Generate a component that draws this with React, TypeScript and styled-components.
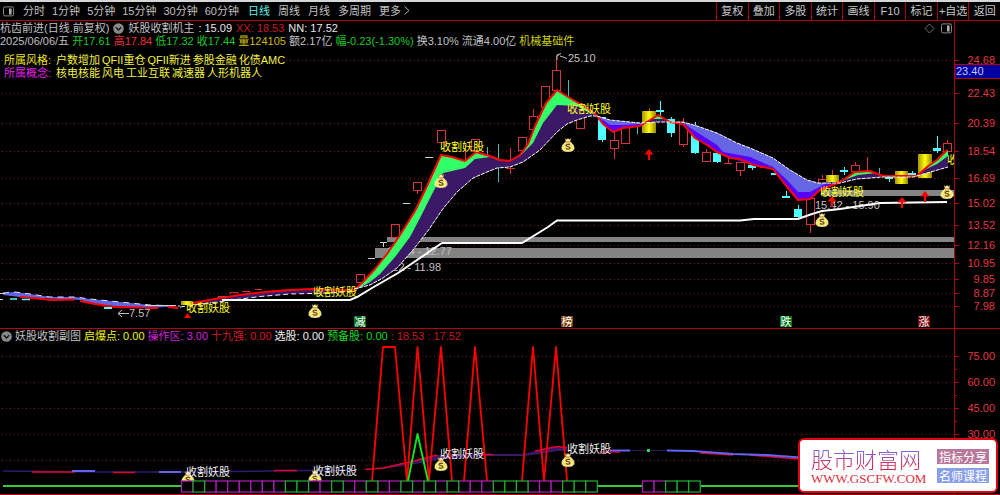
import React from 'react';
import styled, { createGlobalStyle } from 'styled-components';

const UI_FONT = '"Liberation Sans", "Noto Sans CJK SC", sans-serif';

const GlobalStyle = createGlobalStyle`
  * { box-sizing: border-box; }
  body { margin: 0; background: #000; font-family: ${UI_FONT}; font-size: 11px; line-height: 13px; color: #c0c0c0; }
  button { font: inherit; }
`;

const Screen = styled.main`
  position: relative;
  display: flex;
  flex-direction: column;
  background: #000;
`;

const WindowEdge = styled.div`
  height: 2px;
  background: #d4d6d8;
`;

const Toolbar = styled.header`
  display: flex;
  align-items: stretch;
  justify-content: space-between;
  height: 19px;
  border-bottom: 1px solid #b00010;
`;

const Periods = styled.nav`
  display: flex;
  align-items: center;
  gap: 9px;
  padding-left: 3px;
`;

const PeriodGroup = styled.div<{ $gap: number }>`
  display: flex;
  gap: ${(p) => p.$gap}px;
`;

const PeriodButton = styled.button<{ $active?: boolean }>`
  padding: 0;
  border: 0;
  background: none;
  white-space: nowrap;
  line-height: 13px;
  color: ${(p) => (p.$active ? '#5ff0e8' : '#c0c0c0')};
  cursor: pointer;
`;

const Actions = styled.div`
  display: grid;
  grid-template-columns: repeat(9, 1fr);
  flex: 0 0 284px;
`;

const ActionButton = styled.button`
  padding: 0;
  border: 0;
  border-left: 1px solid #a00010;
  background: none;
  color: #c8c8c8;
  white-space: nowrap;
  cursor: pointer;
`;

const Panel = styled.section`
  display: grid;
  border-bottom: 1px solid #b00010;
`;

const Chart = styled.svg`
  grid-area: 1 / 1;
  display: block;
  width: 100%;
  height: auto;
  font-family: ${UI_FONT};
  font-size: 11px;
`;

const Overlay = styled.div`
  grid-area: 1 / 1;
  z-index: 1;
  justify-self: stretch;
  align-self: start;
  padding-top: 1px;
`;

const InfoRow = styled.div<{ $gap: number; $indent?: number }>`
  display: flex;
  align-items: center;
  gap: ${(p) => p.$gap}px;
  padding-left: ${(p) => p.$indent ?? 0}px;
  height: 13px;
  white-space: nowrap;
`;

const Value = styled.span<{ $color?: string }>`
  color: ${(p) => p.$color ?? '#c0c0c0'};
`;

const PanelTools = styled.div`
  display: flex;
  gap: 6px;
  margin-left: auto;
  padding-right: 48px;
`;

const Traits = styled.div`
  margin-top: 6px;
`;

const TraitLabel = styled.span<{ $color: string }>`
  width: 50px;
  color: ${(p) => p.$color};
`;

const SiteCard = styled.a`
  position: absolute;
  right: 2px;
  bottom: 2px;
  display: flex;
  align-items: center;
  justify-content: space-between;
  width: 200px;
  height: 55px;
  padding: 0 7px 0 11px;
  border: 2px solid #e00010;
  border-radius: 6px;
  background: #fff;
  text-decoration: none;
`;

const SiteName = styled.div`
  font-size: 22px;
  line-height: 26px;
  font-weight: 300;
  font-family: "Noto Sans CJK SC", sans-serif;
  color: transparent;
  background: linear-gradient(#7a68e0 20%, #d02850 80%);
  background-clip: text;
  -webkit-background-clip: text;
`;

const SiteUrl = styled.div`
  font-family: "Liberation Serif", serif;
  font-size: 13px;
  line-height: 16px;
  color: #e03040;
`;

const CardTags = styled.div`
  display: grid;
  gap: 4px;
`;

const CardTag = styled.span<{ $bg: string }>`
  padding: 0 2px;
  height: 15px;
  font-family: "Noto Sans CJK SC", sans-serif;
  font-size: 12px;
  line-height: 15px;
  color: #fff;
  background: ${(p) => p.$bg};
`;

const RED = '#ff0000';
const CANDLE = '#d8323c';
const CYAN = '#50ffff';
const AXIS = '#b00010';
const AXIS_TEXT = '#e03840';

const DropCircle = () => (
  <svg width="11" height="11" viewBox="0 0 11 11" aria-hidden="true">
    <circle cx="5.5" cy="5.5" r="5.3" fill="#8a8a8a" />
    <path d="M2.8 4.3L5.5 7L8.2 4.3" fill="none" stroke="#111" strokeWidth="1.3" />
  </svg>
);

const SidebarIcon = () => (
  <svg width="11" height="11" viewBox="0 0 11 11" aria-hidden="true">
    <rect x="0.5" y="0.9" width="10" height="9" rx="1.5" fill="none" stroke="#888" />
    <rect x="6" y="2.5" width="2.6" height="6" fill="#b0b0b0" />
  </svg>
);

const Bag = ({ x, y }: { x: number; y: number }) => (
  <g transform={`translate(${x} ${y})`}>
    <path d="M-3 -6.5L-1.2 -5.6L0 -6.8L1.2 -5.6L3 -6.5L1.9 -3H-1.9Z" fill="#fbf0a8" stroke="#8a6a20" strokeWidth="0.5" />
    <path d="M-2 -3H2C4.5 -1.5 6.3 1 6 3.5C5.8 5.6 4 6.4 0 6.4C-4 6.4 -5.8 5.6 -6 3.5C-6.3 1 -4.5 -1.5 -2 -3Z" fill="#f8ea68" stroke="#fff8d0" strokeWidth="0.8" />
    <path d="M2 -0.2C1 -1 -2 -1 -2 0.5C-2 2 2 1.3 2 3C2 4.5 -1.2 4.5 -2.2 3.6" fill="none" stroke="#6c4c38" strokeWidth="1.3" />
    <path d="M-2.2 -3H2.2" stroke="#d08020" strokeWidth="1" />
  </g>
);

const UpArrow = ({ x, y }: { x: number; y: number }) => (
  <path d={`M${x} ${y}L${x + 4.5} ${y + 5.5}H${x + 1}V${y + 11}H${x - 1}V${y + 5.5}H${x - 4.5}Z`} fill={RED} />
);

const priceTicks: [number, string][] = [
  [60, '24.68'], [93, '22.43'], [123, '20.39'], [151, '18.54'], [178, '16.69'], [203, '15.02'],
  [225, '13.52'], [245, '12.16'], [263, '10.95'], [279, '9.85'], [293, '8.87'], [306, '7.98'],
];
const subTicks: [number, string][] = [[356, '75.00'], [382, '60.00'], [408, '45.00'], [434, '30.00'], [460, '']];

const Axis = ({ ticks, top, bottom }: { ticks: [number, string][]; top: number; bottom: number }) => (
  <g>
    {ticks.map(([y, label]) => (
      <g key={y}>
        <path d={`M2 ${y + 0.5}H954`} stroke="#7c1820" strokeDasharray="1 3" shapeRendering="crispEdges" />
        <path d={`M954 ${y + 0.5}H959`} stroke={AXIS} />
        {label && <text x="995" y={y + 4} textAnchor="end" fill={AXIS_TEXT}>{label}</text>}
      </g>
    ))}
    <path d={`M954.5 ${top}V${bottom}`} stroke={AXIS} />
  </g>
);

/* centre x, body top, body bottom, wick top, wick bottom */
const risingCandles = [
  [360, 274, 282, 274, 282], [395, 224, 237, 224, 237], [417, 182, 190, 182, 194], [441, 130, 142, 130, 142],
  [475, 139, 150, 139, 150], [522, 137, 150, 137, 156], [533, 116, 129, 109, 136], [545, 86, 107, 86, 107],
  [556, 70, 90, 56, 90], [580, 115, 128, 115, 128], [614, 140, 148, 132, 159], [625, 127, 143, 127, 143],
  [683, 124, 144, 118, 147], [706, 152, 161, 149, 161], [740, 162, 170, 162, 176], [810, 198, 224, 198, 233],
  [822, 179, 183, 175, 183], [855, 165, 171, 162, 171], [947, 143, 151, 140, 151],
];
const fallingCandles = [
  [602, 117, 140, 117, 142], [671, 119, 133, 117, 137], [695, 132, 153, 122, 154], [717, 153, 162, 150, 163],
  [752, 165, 168, 162, 170], [798, 209, 217, 205, 220], [937, 148, 151, 136, 153], [844, 170, 172, 167, 175],
  [889, 177, 179, 176, 182], [912, 173, 175, 171, 176], [660, 110, 112, 101, 117], [786, 196, 198, 191, 198],
  [775, 173, 175, 172, 175],
];
const signalCandles = [
  [642, 111, 14, 22], [826, 175, 13, 7], [895, 171, 13, 13], [918, 154, 14, 24], [181, 301, 12, 4],
];

const leftTop = 'M3 293L15 292L30 294L50 297L75 297L90 299L110 301L130 303L150 305L180 306';
const rally = 'M354 290L362 283L375 269L387 254L400 235L415 211L427 186L441 155L452 157L465 161L476 152L490 156L500 160L510 161L520 155L528 144L535 126L546 103L557 90L568 97L582 105L597 115';
const avgBack = 'L597 116L590 116L577 120L567 124L557 132L540 150L523 162L510 167L497 168L487 172L473 178L457 192L442 210L430 228L413 250L397 268L383 278L370 285L354 289';
const avgLine = 'M597 116L610 120L640 123L657 122L670 122L683 122L697 126L717 133L737 143L750 148L773 158L790 170L807 180L818 183L840 183';
const fall = 'M597 116L603 124L613 132L623 128L640 126L647 122L658 115L670 122L683 124L695 138L707 145L717 152L730 158L740 159L753 165L773 169L787 187L798 200L810 199L820 190L840 182L855 172L870 171L883 176L917 176L927 167L937 160L947 150';

const PriceChart = () => (
  <Chart viewBox="0 21 1000 307" role="img" aria-label="日线走势图">
    <defs>
      <linearGradient id="gold">
        <stop offset="0" stopColor="#a89400" />
        <stop offset="0.5" stopColor="#ffff10" />
        <stop offset="1" stopColor="#988400" />
      </linearGradient>
      <clipPath id="plot"><rect x="0" y="21" width="954" height="474" /></clipPath>
    </defs>
    <Axis ticks={priceTicks} top={21} bottom={328} />
    <g fill="#848484">
      <rect x="387" y="237" width="567" height="5" />
      <rect x="375" y="248" width="579" height="10" />
      <rect x="821" y="190" width="133" height="6" />
    </g>
    <g fill="#c0c0c0">
      <text x="452" y="255" textAnchor="end">12.14 - 12.77</text>
      <text x="441" y="271" textAnchor="end">11.22 - 11.98</text>
      <text x="815" y="209">15.42 - 15.90</text>
    </g>

    <g shapeRendering="crispEdges">
      {risingCandles.map(([x, t, b, wt, wb]) => (
        <g key={x} fill="none" stroke={CANDLE}>
          <path d={`M${x + 0.5} ${wt}V${t}M${x + 0.5} ${b}V${wb}`} />
          <rect x={x - 3.5} y={t + 0.5} width="8" height={b - t} />
        </g>
      ))}
      {fallingCandles.map(([x, t, b, wt, wb]) => (
        <g key={x} fill={CYAN}>
          <rect x={x} y={wt} width="1" height={wb - wt} />
          <rect x={x - 4} y={t} width="8" height={b - t} />
        </g>
      ))}
      {signalCandles.map(([x, y, w, h]) => (
        <rect key={x} x={x} y={y} width={w} height={h} fill="url(#gold)" />
      ))}
      <path d="M649.5 108V111M832.5 170V175M867.5 157V171M465.5 145V160M510.5 148V174M506 168.5H515M760 167.5H768M728.5 158V164M724 163.5H732" stroke={CANDLE} />
      <path d="M487.5 147V155M498.5 144V182M568.5 80V98M637.5 125V134M879.5 168V177" stroke="#48b8b8" />
      <path d="M425 157.5H433M403 203.5H410M380 242.5H387M383.5 242V247M368 258.5H375" stroke="#d0d0d0" />
    </g>

    <path d={`${leftTop}L150 308L130 307L115 306L95 304L80 300L60 299L40 298L20 297L3 295Z`} fill="#6464e0" />
    <path d={leftTop} fill="none" stroke="#e0e0ff" strokeDasharray="6 5" />
    <path d="M20 297L42 299L52 300L74 299.5M80 301L95 304L115 307L143 307.5M145 308H158M168 307L178 308" fill="none" stroke={RED} strokeWidth="2" />
    <path d="M10 299H17M22 299.5H30" stroke={CYAN} strokeWidth="1.5" />
    <path d="M0 293.5H5M0 299.5H3M145 305.5H176" stroke="#d0d0d0" />
    <rect x="104" y="307" width="8" height="2" fill={CYAN} />

    <path d="M195 303L215 300L240 295L265 292L290 290L312 288L330 289L354 289L354 292L330 293L290 294L260 297L225 301L195 305Z" fill="#3c1966" />
    <path d="M193 303L215 299L240 295L265 292L290 290L312 289L330 290L354 290" fill="none" stroke={RED} strokeWidth="2" />
    <path d="M218 298.5V296.5H226V298M230 294.5V292.5H238V294M242 291.5H250V293M255 289.5H262" fill="none" stroke={CANDLE} />
    <path d="M180 307L195 305L225 301L260 296.5L290 294L330 293L354 291" fill="none" stroke="#f0f0f0" strokeDasharray="5 3" />

    <path d="M222 300H350L357 297L372 288L398 273L442 243H522L548 227L557 220.5H740L754 219H798L812 214L822 211L840 209L860 206L880 203L947 202" fill="none" stroke="#fff" strokeWidth="2" />

    <path d={`${rally}${avgBack}Z`} fill="#3c1966" />
    <path d={`${rally}L590 113L577 106L557 105L543 123L533 143L520 156L510 161L500 161L490 157L475 159L465 168L443 173L430 198L420 218L410 237L395 257L380 274L370 282L354 291Z`} fill="#33ff66" />
    <path d={rally} fill="none" stroke={RED} strokeWidth="2" strokeLinejoin="round" />
    <path d={`M597 116${avgBack}`} fill="none" stroke="#fff" strokeDasharray="4 1" />

    <path d={`${avgLine}L820 190L810 199L798 200L787 187L773 169L753 165L740 159L730 158L717 152L707 145L695 138L683 124L670 122L657 121L647 122L640 126L623 128L613 132L603 124Z`} fill="#6666e4" />
    <path d="M683 123L695 131L717 145L723 152L750 157L773 167L787 180L798 192L810 192L825 184L840 182L820 190L810 199L798 200L787 187L773 169L753 165L730 158L717 152L695 138ZM597 116L610 125L623 125L640 124L640 126L623 128L613 132L603 124Z" fill="#5800f8" />
    <path d="M645 122L658 116L670 122ZM840 183L855 172L870 171L883 176L917 176L927 167L937 160L948 150V167L927 173L913 177L883 177L857 179Z" fill="#3c1966" />
    <path d="M836 183L855 172L870 171L876 173L858 175ZM922 171L937 160L948 150V156L937 164ZM652 119L658 116L664 119Z" fill="#33ff66" />
    <path d={fall} fill="none" stroke={RED} strokeWidth="2" strokeLinejoin="round" />
    <path d={`${avgLine}L857 179L883 177L913 177L927 173L948 167`} fill="none" stroke="#fff" strokeDasharray="4 1" />

    <UpArrow x={649} y={149} />
    <UpArrow x={832} y={196} />
    <UpArrow x={902} y={197} />
    <UpArrow x={925} y={191} />
    <path d="M187.5 313L191 318H184Z" fill={RED} />

    <g fill="#ffff20" clipPath="url(#plot)">
      <text x="186" y="312">收割妖股</text>
      <text x="313" y="296">收割妖股</text>
      <text x="440" y="151">收割妖股</text>
      <text x="567" y="113">收割妖股</text>
      <text x="820" y="196">收割妖股</text>
      <text x="947" y="164">收</text>
    </g>
    <Bag x={315} y={311} />
    <Bag x={441} y={181} />
    <Bag x={568} y={145} />
    <Bag x={822} y={220} />
    <Bag x={947} y={192} />

    <path d="M561 53.5L557 55V60M557 55H559M560 56L563 57L567 58.5M129 313.5H118M122 310L118 313.5L122 317" fill="none" stroke="#c0c0c0" />
    <text x="568" y="62" fill="#c0c0c0">25.10</text>
    <text x="129" y="317" fill="#c0c0c0">7.57</text>

    {([[354, '减', '#007020'], [561, '榜', '#7c4008'], [780, '跌', '#007818'], [918, '涨', '#800810']] as [number, string, string][]).map(
      ([x, label, bg]) => (
        <g key={x}>
          <rect x={x} y="316" width="12" height="11" fill={bg} />
          <text x={x + 6} y="326" textAnchor="middle" fill="#fff">{label}</text>
        </g>
      ),
    )}

    <rect x="955" y="64.5" width="46" height="14" fill="#0000a0" stroke={AXIS} />
    <text x="956" y="75" fill="#c4c8ff">23.40</text>
  </Chart>
);

const PITCH = 11.55;
const greenCells = [1, 9, 10, 13, 16, 19, 21, 23, 27, 28, 29, 33, 34, 35];
const cells = [
  ...Array.from({ length: 36 }, (_, i) => ({ x: 181.5 + i * PITCH, green: greenCells.includes(i) })),
  ...Array.from({ length: 5 }, (_, i) => ({ x: 642.5 + i * PITCH, green: i > 1 })),
].sort((a, b) => Number(a.green) - Number(b.green));

const IndicatorChart = () => (
  <Chart viewBox="0 329 1000 165" role="img" aria-label="妖股收割副图">
    <Axis ticks={subTicks} top={329} bottom={494} />
    <path d="M954 369.5H957M954 395.5H957M954 421.5H957" stroke={AXIS} />
    <path d="M3 471L100 472L187 472L270 471L357 470" fill="none" stroke="#2c1c70" strokeWidth="1.5" />
    <path d="M357 470L383 468L410 463L437 455L480 454L523 454L540 450L557 446L567 448L567 451L557 451L540 454L523 456L480 456L437 460L410 465L383 469Z" fill="#3c1966" />
    <path d="M32 472H75M113 472.5H135M274 470.5H297M365 469.5L383 468L410 462L437 455M480 454.5H493M535 451L557 446.5L567 447.5M600 452H620M700 453L733 455M750 455L798 459" fill="none" stroke="#e00030" strokeWidth="1.5" />
    <path d="M72 471H95M159 472H181M610 450.5H630M667 450.5L693 451L733 454L767 455L800 457.5" fill="none" stroke="#6464f0" strokeWidth="2" />
    <path d="M630 450.5H667" stroke="#2c1850" />
    <rect x="647" y="449" width="3" height="3" fill="#30d060" />

    <path d="M372 481L383 347H395L407 481L417.5 347L429 481L441 347L452 481M464 481L475 347L487 481M522 481L533 347L544 481L556 347L567 481" fill="none" stroke={RED} strokeWidth="1.8" strokeLinejoin="round" />
    <path d="M408 481L417.5 434L428 481" fill="none" stroke="#00f020" strokeWidth="1.8" strokeLinejoin="round" />

    <Bag x={188} y={478} />
    <Bag x={315} y={477} />
    <Bag x={441} y={464} />
    <Bag x={568} y={460} />
    <path d="M3 486H181M597 486H642M701 486H954" stroke="#38c838" strokeWidth="2" />
    {cells.map(({ x, green }) => (
      <rect key={x} x={x} y="481" width={PITCH} height="11" fill="#000" stroke={green ? '#20b030' : '#b020b8'} strokeWidth="1.2" />
    ))}
    <g fill="#f0f0f0">
      <text x="186" y="476">收割妖股</text>
      <text x="313" y="475">收割妖股</text>
      <text x="440" y="458">收割妖股</text>
      <text x="567" y="453">收割妖股</text>
    </g>
  </Chart>
);

const minutePeriods = ['分时', '1分钟', '5分钟', '15分钟', '30分钟', '60分钟'];
const dayPeriods = ['日线', '周线', '月线', '多周期', '更多'];
const actions = ['复权', '叠加', '多股', '统计', '画线', 'F10', '标记', '+自选', '返回'];

const quote: [string, string?][] = [
  ['2025/06/06/五'], ['开17.61', '#18c828'], ['高17.84', '#f03038'], ['低17.32', '#18c828'], ['收17.44', '#18c828'],
  ['量124105', '#c8b818'], ['额2.17亿'], ['幅-0.23(-1.30%)', '#18c828'], ['换3.10%'], ['流通4.00亿'], ['机械基础件', '#d0d010'],
];
const indicators: [string, string?][] = [
  ['妖股收割副图'], ['启爆点: 0.00', '#f0f010'], ['操作区: 3.00', '#d020d8'], ['十九强: 0.00', '#d81820'],
  ['选股: 0.00', '#f0f0f0'], ['预备股: 0.00', '#18d828'], [': 18.53', '#c81820'], [': 17.52', '#c81820'],
];

export default function App() {
  return (
    <Screen>
      <GlobalStyle />
      <WindowEdge />
      <Toolbar>
        <Periods>
          <SidebarIcon />
          <PeriodGroup $gap={7}>
            {minutePeriods.map((p) => <PeriodButton key={p}>{p}</PeriodButton>)}
          </PeriodGroup>
          <PeriodGroup $gap={8}>
            {dayPeriods.map((p) => (
              <PeriodButton key={p} $active={p === '日线'}>
                {p}
                {p === '更多' && (
                  <svg width="9" height="9" viewBox="0 0 9 9" aria-hidden="true">
                    <path d="M3.5 0.5L8 4.5L3.5 8.5" fill="none" stroke="#b0b0b0" />
                  </svg>
                )}
              </PeriodButton>
            ))}
          </PeriodGroup>
        </Periods>
        <Actions>
          {actions.map((a) => <ActionButton key={a}>{a}</ActionButton>)}
        </Actions>
      </Toolbar>

      <Panel>
        <PriceChart />
        <Overlay>
          <InfoRow $gap={4}>
            <Value>杭齿前进(日线.前复权)</Value>
            <DropCircle />
            <Value>妖股收割机主</Value>
            <Value $color="#e8e8e8">: 15.09</Value>
            <Value $color="#c81820">XX: 18.53</Value>
            <Value $color="#e8e8e8">NN: 17.52</Value>
            <PanelTools>
              <svg width="11" height="11" viewBox="0 0 11 11" aria-hidden="true">
                <path d="M5.5 1L10 5.5L5.5 10L1 5.5Z" fill="none" stroke="#707070" />
              </svg>
              <SidebarIcon />
            </PanelTools>
          </InfoRow>
          <InfoRow $gap={3}>
            {quote.map(([text, color]) => <Value key={text} $color={color}>{text}</Value>)}
          </InfoRow>
          <Traits>
            <InfoRow $gap={2} $indent={4}>
              <TraitLabel $color="#e8e020">所属风格:</TraitLabel>
              {['户数增加', 'QFII重仓', 'QFII新进', '参股金融', '化债AMC'].map((t) => (
                <Value key={t} $color="#f0f040">{t}</Value>
              ))}
            </InfoRow>
            <InfoRow $gap={2} $indent={4}>
              <TraitLabel $color="#e020e8">所属概念:</TraitLabel>
              {['核电核能', '风电', '工业互联', '减速器', '人形机器人'].map((t) => (
                <Value key={t} $color="#f0f040">{t}</Value>
              ))}
            </InfoRow>
          </Traits>
        </Overlay>
      </Panel>

      <Panel>
        <IndicatorChart />
        <Overlay>
          <InfoRow $gap={3} $indent={1}>
            <DropCircle />
            {indicators.map(([text, color]) => <Value key={text} $color={color}>{text}</Value>)}
          </InfoRow>
        </Overlay>
      </Panel>

      <SiteCard href="#">
        <div>
          <SiteName>股市财富网</SiteName>
          <SiteUrl>WWW.GSCFW.COM</SiteUrl>
        </div>
        <CardTags>
          <CardTag $bg="#b8789c">指标分享</CardTag>
          <CardTag $bg="#88a0e8">名师课程</CardTag>
        </CardTags>
      </SiteCard>
    </Screen>
  );
}
